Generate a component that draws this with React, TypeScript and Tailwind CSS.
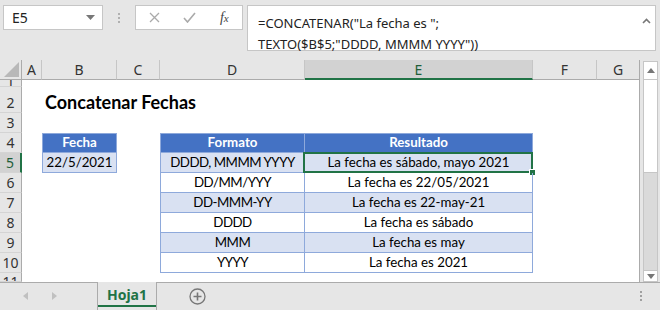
import React from "react";

const UI = { fontFamily: '"Noto Sans", "Open Sans", sans-serif' };
const CELL = { fontFamily: 'Lato, "Noto Sans", sans-serif' };

function TopBar() {
  return (
    <div className="h-[60px] bg-[#e6e6e6] flex items-start pt-[5px] pl-[3px]" style={UI}>
      <div className="w-[100px] h-[25px] bg-white border border-[#c6c6c6] flex items-center justify-between pl-[8px] pr-[7px] text-[14px] text-[#222]">
        <span>E5</span>
        <svg width="9" height="5" viewBox="0 0 9 5"><path d="M0 0h9L4.5 5z" fill="#777" /></svg>
      </div>
      <div className="w-[32px] h-[25px] flex flex-col items-center justify-center gap-[2px]">
        <div className="w-[2px] h-[2px] bg-[#b0b0b0]" />
        <div className="w-[2px] h-[2px] bg-[#b0b0b0]" />
        <div className="w-[2px] h-[2px] bg-[#b0b0b0]" />
      </div>
      <div className="w-[108px] h-[25px] bg-white border border-[#c6c6c6] flex items-center">
        <div className="w-[36px] flex justify-center pl-[2px]">
          <svg width="11" height="11" viewBox="0 0 11 11"><path d="M1 1l9 9M10 1l-9 9" stroke="#aaa" strokeWidth="1.3" /></svg>
        </div>
        <div className="w-[36px] flex justify-center">
          <svg width="13" height="11" viewBox="0 0 13 11"><path d="M1 6l3.5 4L12 1" stroke="#aaa" strokeWidth="1.6" fill="none" /></svg>
        </div>
        <div className="w-[36px] flex justify-center text-[14px] text-[#444] italic" style={{ fontFamily: '"Liberation Serif", serif' }}>
          <span>f<span className="text-[11px]">x</span></span>
        </div>
      </div>
      <div className="ml-[4px] w-[409px] h-[46px] bg-white border border-[#c6c6c6] relative pl-[10px] pt-[6px] text-[13px] leading-[22px] text-[#222]">
        <div>=CONCATENAR("La fecha es ";</div>
        <div className="-mt-[1px]">TEXTO($B$5;"DDDD, MMMM YYYY"))</div>
        <svg className="absolute right-[4px] top-[12px]" width="9" height="6" viewBox="0 0 9 6"><path d="M1 5l3.5-3.5L8 5" stroke="#777" strokeWidth="1.6" fill="none" /></svg>
      </div>
    </div>
  );
}

const colLetters = ["A", "B", "C", "D", "E", "F", "G"];

function Sheet() {
  const rows = [1, 2, 3, 4, 5, 6, 7, 8, 9, 10, 11];
  const fmt = [
    ["DDDD, MMMM YYYY", "La fecha es sábado, mayo 2021"],
    ["DD/MM/YYY", "La fecha es 22/05/2021"],
    ["DD-MMM-YY", "La fecha es 22-may-21"],
    ["DDDD", "La fecha es sábado"],
    ["MMM", "La fecha es may"],
    ["YYYY", "La fecha es 2021"],
  ];
  return (
    <div className="w-[640px] h-[222px] bg-white border-r border-[#ababab] grid grid-cols-[22px_20px_75px_43px_145px_228px_64px_43px] grid-rows-[20px_7px_26px_repeat(8,20px)_9px] overflow-hidden">
      {/* corner */}
      <div className="row-start-1 col-start-1 bg-[#e6e6e6] border-b border-r border-[#ababab] flex items-end justify-end pr-[2px] pb-[2px]">
        <svg width="15" height="15" viewBox="0 0 15 15"><path d="M15 0v15H0z" fill="#b8b8b8" /></svg>
      </div>
      {colLetters.map((c, i) => (
        <div
          key={c}
          className={
            "row-start-1 flex items-center justify-center text-[14px] " +
            (c === "E"
              ? "bg-[#d2d2d2] border-b-2 border-b-[#217346] border-r border-r-[#c6c6c6] text-[#1e5e3a]"
              : "bg-[#e6e6e6] border-b border-b-[#ababab] border-r border-r-[#c6c6c6] text-[#333]")
          }
          style={{ ...UI, gridColumnStart: i + 2 }}
        >
          {c}
        </div>
      ))}
      {rows.map((r) => (
        <div
          key={r}
          className={
            "col-start-1 flex justify-center text-[14px] overflow-hidden " +
            (r === 5
              ? "bg-[#d2d2d2] border-r-2 border-r-[#217346] border-b border-b-[#d4d4d4] text-[#1e5e3a]"
              : "bg-[#e6e6e6] border-r border-r-[#ababab] border-b border-b-[#d4d4d4] text-[#333]") +
            (r === 1 ? " items-end" : r === 11 ? " items-start" : r === 2 ? " items-end" : " items-center")
          }
          style={{ ...UI, gridRowStart: r + 1 }}
        >
          {r === 1 ? (
            <span className="block h-[6px] overflow-hidden leading-[6px] text-[14px]">
              <span className="block -mt-[5px] leading-[14px]">1</span>
            </span>
          ) : r === 11 ? (
            <span className="block h-[7px] overflow-hidden mt-[2px]">
              <span className="block leading-[14px]">11</span>
            </span>
          ) : (
            <span className={r === 2 ? "leading-[16px] pb-[1px]" : "leading-[18px]"}>{r}</span>
          )}
        </div>
      ))}
      {/* title */}
      <div className="row-start-3 col-start-3 col-span-4 flex items-end pl-[3px] text-[18px] leading-[22px] font-bold text-black whitespace-nowrap" style={CELL}>
        Concatenar Fechas
      </div>
      {/* Fecha table */}
      <div className="row-start-5 row-span-2 col-start-3 flex flex-col text-[13.3px]" style={CELL}>
        <div className="h-[20px] bg-[#4472c4] border border-[#8ea9db] text-white font-bold flex items-center justify-center">Fecha</div>
        <div className="h-[20px] bg-[#d9e1f2] border-x border-b border-[#8ea9db] text-black flex items-center justify-center">22/5/2021</div>
      </div>
      {/* Formato table */}
      <div className="row-start-5 row-span-7 col-start-5 col-span-2 flex flex-col text-[13.3px]" style={CELL}>
        <div className="h-[20px] flex bg-[#4472c4] text-white font-bold">
          <div className="w-[145px] border border-[#8ea9db] flex items-center justify-center">Formato</div>
          <div className="flex-1 border-y border-r border-[#8ea9db] flex items-center justify-center">Resultado</div>
        </div>
        {fmt.map(([a, b], i) => (
          <div key={a} className={"h-[20px] flex text-black " + (i % 2 === 0 ? "bg-[#d9e1f2]" : "bg-white")}>
            <div className="w-[145px] border-x border-b border-[#8ea9db] flex items-center justify-center whitespace-nowrap tracking-[-0.5px]">{a}</div>
            <div className="flex-1 relative border-r border-b border-[#8ea9db] flex items-center justify-center whitespace-nowrap">
              {b}
              {i === 0 && (
                <>
                  <div className="absolute -left-[2px] -top-[1px] -right-[1px] -bottom-[1px] border-2 border-[#217346]" />
                  <div className="absolute -right-[4px] -bottom-[4px] w-[7px] h-[7px] bg-[#217346] border border-white" />
                </>
              )}
            </div>
          </div>
        ))}
      </div>
    </div>
  );
}

function Scrollbar() {
  return (
    <div className="w-[20px] h-[222px] bg-[#e6e6e6] pl-[3px] pr-[2px] pt-[1px] flex flex-col">
      <div className="h-[19px] bg-white border border-[#c6c6c6] flex items-center justify-center">
        <svg width="8" height="5" viewBox="0 0 8 5"><path d="M0 5h8L4 0z" fill="#777" /></svg>
      </div>
      <div className="h-[93px] bg-white border-x border-b border-[#c6c6c6]" />
      <div className="flex-1 bg-[#dadada] border-x border-[#c6c6c6]" />
      <div className="h-[12px] bg-white border border-[#c6c6c6] flex items-center justify-center">
        <svg width="8" height="5" viewBox="0 0 8 5"><path d="M0 0h8L4 5z" fill="#777" /></svg>
      </div>
    </div>
  );
}

function TabBar() {
  return (
    <div className="h-[28px] bg-[#e6e6e6] relative flex items-stretch" style={UI}>
      <div className="absolute left-0 right-0 top-0 h-[1px] bg-[#ababab]" />
      <div className="w-[97px] flex items-center pl-[23px] gap-[24px]">
        <svg width="5" height="8" viewBox="0 0 5 8"><path d="M5 0v8L0 4z" fill="#c0c0c0" /></svg>
        <svg width="5" height="8" viewBox="0 0 5 8"><path d="M0 0v8l5-4z" fill="#c0c0c0" /></svg>
      </div>
      <div className="relative w-[60px] bg-[#e6e6e6] border-x border-[#ababab] flex items-center justify-center text-[14px] font-bold text-[#217346] pb-[3px]">
        Hoja1
        <div className="absolute left-0 right-0 bottom-[3px] h-[2px] bg-[#217346]" />
      </div>
      <div className="w-[81px] flex items-center justify-center">
        <svg width="17" height="17" viewBox="0 0 17 17">
          <circle cx="8.5" cy="8.5" r="7.5" fill="none" stroke="#777" strokeWidth="1.3" />
          <path d="M8.5 4.5v8M4.5 8.5h8" stroke="#777" strokeWidth="1.6" />
        </svg>
      </div>
      <div className="flex-1" />
      <div className="w-[36px] flex flex-col items-center justify-center gap-[2px] mr-[1px]">
        <div className="w-[2px] h-[2px] bg-[#a0a0a0]" />
        <div className="w-[2px] h-[2px] bg-[#a0a0a0]" />
        <div className="w-[2px] h-[2px] bg-[#a0a0a0]" />
      </div>
    </div>
  );
}

export default function App() {
  return (
    <div className="w-[660px] h-[310px] overflow-hidden bg-[#e6e6e6]">
      <TopBar />
      <div className="flex">
        <Sheet />
        <Scrollbar />
      </div>
      <TabBar />
    </div>
  );
}
